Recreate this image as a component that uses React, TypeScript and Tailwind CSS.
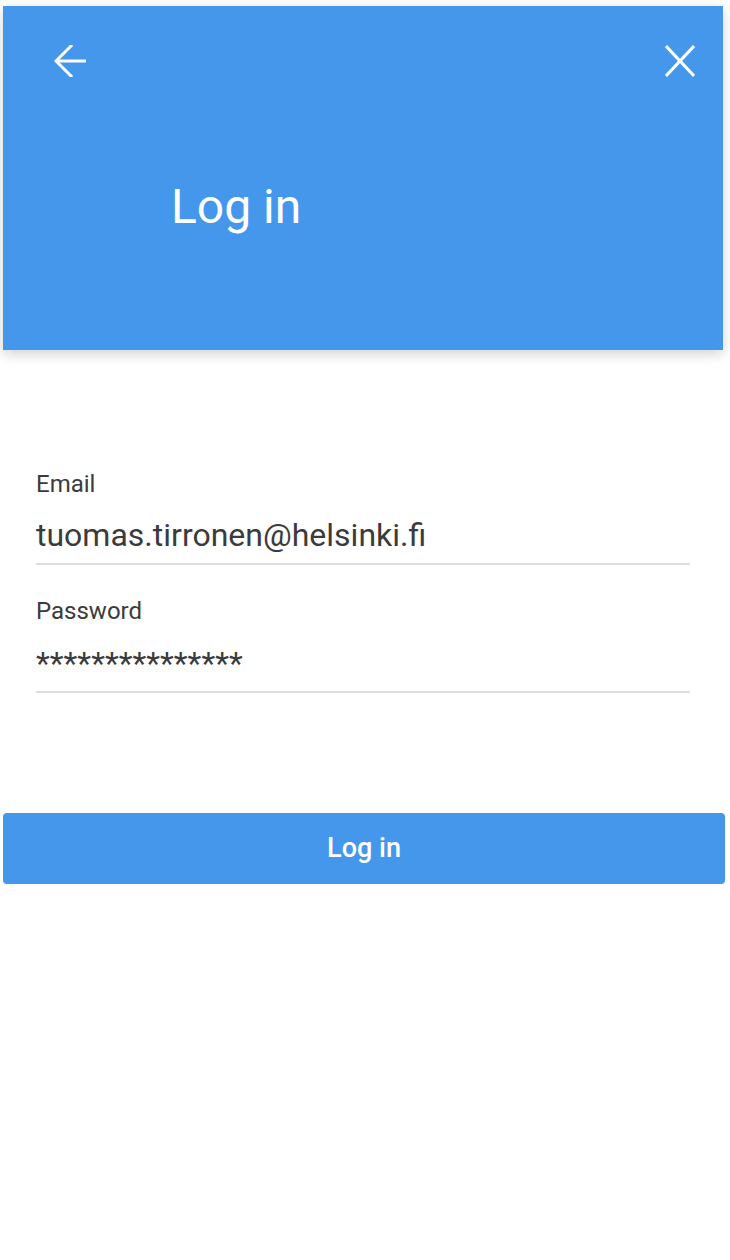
const BackArrow = () => (
  <svg width="32" height="32" viewBox="0 0 32 32" fill="none" stroke="white" strokeWidth="3">
    <path d="M2 16H32" />
    <path d="M17 1L2 16L17 31" strokeLinecap="square" />
  </svg>
);

const CloseIcon = () => (
  <svg width="30" height="32" viewBox="0 0 30 32" fill="none" stroke="white" strokeWidth="3">
    <path d="M1 1L29 31M29 1L1 31" />
  </svg>
);

export default function App() {
  return (
    <div className="w-[730px] h-[1260px] bg-white pt-[6px] font-['Roboto',sans-serif]">
      <div className="ml-[3px] w-[720px] h-[344px] bg-[#4497eb] shadow-[0_4px_12px_rgba(0,0,0,0.18)] flex flex-col">
        <div className="flex justify-between items-center pt-[39px] pl-[51px] pr-[28px]">
          <BackArrow />
          <CloseIcon />
        </div>
        <h1 className="text-white text-[48px] leading-none pl-[168px] mt-[106px]">Log in</h1>
      </div>

      <div className="pl-[36px] pr-[40px] pt-[122px]">
        <label className="block text-[24px] leading-none text-[#3b3b3b]">Email</label>
        <div className="mt-[23px] pb-[12px] border-b-2 border-[#dedede] text-[32px] leading-none text-[#3b3b3b]">
          tuomas.tirronen@helsinki.fi
        </div>
        <label className="block mt-[34px] text-[24px] leading-none text-[#3b3b3b]">Password</label>
        <div className="mt-[24px] pb-[12px] border-b-2 border-[#dedede] text-[32px] leading-none text-[#3b3b3b]">
          ***************
        </div>
      </div>

      <button className="ml-[3px] mt-[120px] w-[722px] h-[71px] rounded-[4px] bg-[#4497eb] text-white text-[27px] font-medium">
        Log in
      </button>
    </div>
  );
}
